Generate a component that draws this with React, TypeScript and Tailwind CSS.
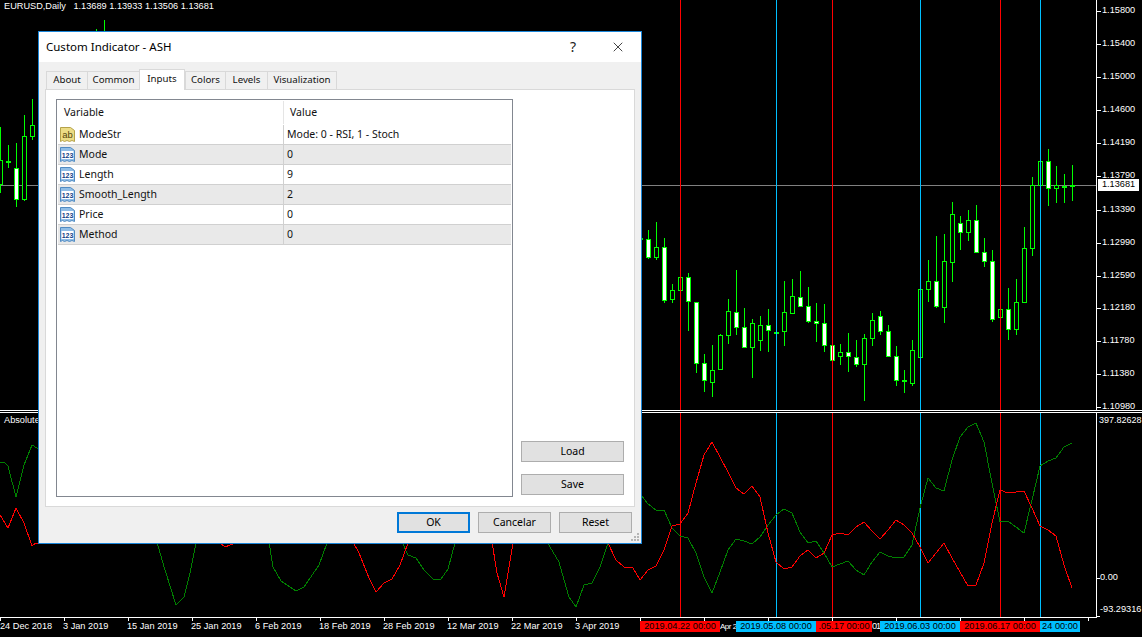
import { X } from "lucide-react"

type Candle = [number, number, number, number, number, "w" | "h"]

// x, wick top, wick bottom, body top, body bottom, w = white body / h = hollow
const candles: Candle[] = [
  [0, 127, 193, 160, 184, "h"], [8, 145, 168, 161, 162, "h"], [16, 143, 207, 168, 199, "w"],
  [24, 115, 201, 136, 199, "h"], [32, 99, 140, 125, 136, "h"],
  [96, 29, 40, 34, 38, "h"], [104, 20, 40, 34, 38, "h"],
  [640, 238, 239, 238, 239, "h"],
  [648, 230, 259, 239, 257, "w"], [656, 222, 260, 247, 257, "h"], [664, 238, 303, 247, 300, "w"],
  [672, 284, 303, 290, 299, "h"], [680, 277, 290, 277, 290, "h"], [688, 273, 331, 277, 301, "w"],
  [696, 302, 373, 302, 363, "w"], [704, 354, 392, 363, 380, "w"], [712, 345, 397, 370, 382, "h"],
  [720, 334, 369, 335, 369, "h"], [728, 299, 344, 311, 335, "h"], [736, 270, 335, 312, 327, "w"],
  [744, 308, 347, 327, 347, "w"], [752, 319, 378, 323, 347, "h"], [760, 316, 351, 325, 340, "h"],
  [768, 309, 352, 325, 330, "w"], [776, 331, 333, 332, 333, "h"], [784, 281, 346, 312, 331, "h"],
  [792, 279, 314, 296, 313, "h"], [800, 271, 307, 297, 306, "w"], [808, 287, 323, 306, 321, "w"],
  [816, 303, 342, 321, 323, "w"], [824, 304, 352, 323, 345, "w"], [832, 345, 360, 345, 360, "w"],
  [840, 344, 365, 352, 356, "h"], [848, 333, 372, 352, 356, "w"], [856, 340, 367, 357, 364, "w"],
  [864, 334, 401, 338, 364, "h"], [872, 313, 346, 320, 338, "h"], [880, 311, 335, 316, 331, "w"],
  [888, 325, 357, 331, 356, "w"], [896, 346, 386, 356, 380, "w"], [904, 370, 393, 380, 381, "h"],
  [912, 340, 386, 350, 383, "h"], [920, 289, 357, 289, 357, "h"], [928, 260, 302, 281, 289, "h"],
  [936, 236, 308, 281, 306, "w"], [944, 234, 323, 261, 307, "h"], [952, 202, 282, 214, 262, "h"],
  [960, 216, 250, 223, 232, "w"], [968, 210, 241, 220, 232, "h"], [976, 205, 252, 220, 252, "w"],
  [984, 238, 267, 252, 261, "w"], [992, 250, 322, 261, 319, "w"], [1000, 309, 317, 309, 317, "h"],
  [1008, 288, 340, 309, 329, "w"], [1016, 279, 335, 302, 329, "h"], [1024, 227, 302, 248, 302, "h"],
  [1032, 177, 256, 185, 248, "h"], [1040, 161, 185, 161, 185, "h"], [1048, 149, 206, 161, 188, "w"],
  [1056, 166, 203, 185, 188, "h"], [1064, 174, 203, 186, 187, "h"], [1072, 165, 201, 185, 186, "h"],
]

const redLine = [
  [0, 515], [8, 528], [16, 508], [24, 523], [32, 546], [36, 543], [43, 543], [220, 543], [225, 547], [235, 543],
  [353, 542], [359, 553], [369, 578], [376, 592], [384, 583], [392, 579], [400, 565], [408, 543], [492, 542],
  [497, 573], [504, 597], [508, 573], [513, 543], [608, 543], [616, 560], [624, 567], [633, 568], [640, 580],
  [648, 570], [656, 566], [664, 550], [672, 526], [680, 524], [688, 513], [696, 483], [704, 455], [712, 442],
  [720, 457], [728, 472], [736, 488], [744, 494], [752, 486], [760, 497], [768, 533], [776, 562], [784, 569],
  [792, 567], [800, 556], [808, 550], [816, 558], [824, 553], [832, 535], [840, 533], [848, 535], [856, 527],
  [864, 522], [872, 531], [880, 539], [888, 530], [896, 520], [904, 525], [912, 533], [920, 547], [928, 563],
  [936, 553], [944, 543], [952, 558], [960, 572], [968, 586], [976, 585], [984, 563], [992, 523], [1000, 490],
  [1008, 493], [1016, 492], [1024, 491], [1032, 508], [1040, 526], [1048, 530], [1056, 536], [1064, 565], [1072, 588],
]

const greenLine = [
  [0, 462], [5, 463], [8, 466], [16, 497], [24, 465], [32, 445], [37, 448], [157, 542], [165, 570], [176, 605],
  [184, 597], [190, 573], [196, 543], [269, 542], [273, 567], [281, 581], [296, 591], [304, 587], [319, 565],
  [327, 543], [402, 542], [408, 555], [416, 558], [424, 570], [433, 579], [441, 579], [448, 569], [455, 543],
  [547, 542], [559, 562], [569, 597], [576, 607], [584, 585], [592, 583], [600, 567], [608, 543], [642, 496],
  [648, 504], [656, 510], [664, 510], [672, 528], [680, 536], [688, 538], [696, 553], [704, 577], [712, 593],
  [720, 572], [728, 550], [736, 539], [744, 541], [752, 544], [760, 537], [768, 525], [776, 515], [784, 509],
  [792, 513], [800, 532], [808, 543], [816, 541], [824, 553], [832, 567], [840, 564], [848, 561], [856, 570],
  [864, 575], [872, 562], [880, 552], [888, 556], [896, 558], [904, 557], [912, 545], [920, 508], [928, 478],
  [936, 488], [944, 491], [952, 460], [960, 437], [968, 427], [976, 423], [984, 442], [992, 483], [1000, 522],
  [1008, 521], [1016, 527], [1024, 533], [1032, 500], [1040, 466], [1048, 461], [1056, 458], [1064, 447], [1072, 443],
]

const vlines: [number, string][] = [
  [680, "#ff0000"], [776, "#00bfff"], [832, "#ff0000"], [920, "#00bfff"], [1000, "#ff0000"], [1040, "#00bfff"],
]

const priceLabels: [string, number][] = [
  ["1.15800", 11], ["1.15400", 44], ["1.15000", 77], ["1.14600", 110], ["1.14190", 143], ["1.13790", 176],
  ["1.13390", 210], ["1.12990", 243], ["1.12590", 276], ["1.12180", 308], ["1.11780", 341], ["1.11380", 374],
  ["1.10980", 407],
]

const dateLabels: [string, number][] = [
  ["24 Dec 2018", 0], ["3 Jan 2019", 63], ["15 Jan 2019", 127], ["25 Jan 2019", 191], ["6 Feb 2019", 255],
  ["18 Feb 2019", 319], ["28 Feb 2019", 383], ["12 Mar 2019", 447], ["22 Mar 2019", 511], ["3 Apr 2019", 575],
]

const flags: { text: string; left: number; width: number; red: boolean }[] = [
  { text: "2019.04.22 00:00", left: 640, width: 80, red: true },
  { text: "2019.05.08 00:00", left: 736, width: 80, red: false },
  { text: ".05.17 00:00", left: 816, width: 56, red: true },
  { text: "2019.06.03 00:00", left: 880, width: 80, red: false },
  { text: "2019.06.17 00:00", left: 960, width: 80, red: true },
  { text: "24 00:00", left: 1040, width: 40, red: false },
]

const inputs: { name: string; value: string; kind: "ab" | "123" }[] = [
  { name: "ModeStr", value: "Mode: 0 - RSI, 1 - Stoch", kind: "ab" },
  { name: "Mode", value: "0", kind: "123" },
  { name: "Length", value: "9", kind: "123" },
  { name: "Smooth_Length", value: "2", kind: "123" },
  { name: "Price", value: "0", kind: "123" },
  { name: "Method", value: "0", kind: "123" },
]

const tabs = ["About", "Common", "Inputs", "Colors", "Levels", "Visualization"]
const tabWidths = [41, 52, 46, 40, 42, 69]

const toPoints = (pts: number[][]) => pts.map((p) => p.join(",")).join(" ")

function VLines({ top, bottom }: { top: number; bottom: number }) {
  return (
    <>
      {vlines.map(([x, color]) => (
        <line key={x} x1={x + 0.5} x2={x + 0.5} y1={top} y2={bottom} stroke={color} />
      ))}
    </>
  )
}

function MainChart() {
  return (
    <svg className="absolute inset-0" width="1096" height="410" viewBox="0 0 1096 410" shapeRendering="crispEdges">
      <line x1="0" x2="1096" y1="185.5" y2="185.5" stroke="#808080" />
      {candles.map(([x, wt, wb, bt, bb, kind]) => (
        <g key={x}>
          <line x1={x + 0.5} x2={x + 0.5} y1={wt} y2={wb} stroke="#00ff00" />
          <rect
            x={x - 1.5}
            y={bt + 0.5}
            width="4"
            height={bb - bt}
            fill={kind === "w" ? "#ffffff" : "#000000"}
            stroke="#00ff00"
          />
        </g>
      ))}
      <VLines top={0} bottom={410} />
    </svg>
  )
}

function SubChart() {
  return (
    <svg className="absolute inset-0" width="1096" height="204" viewBox="0 413 1096 204" shapeRendering="crispEdges">
      <VLines top={413} bottom={617} />
      <polyline points={toPoints(greenLine)} fill="none" stroke="#008000" />
      <polyline points={toPoints(redLine)} fill="none" stroke="#ff0000" />
    </svg>
  )
}

function PriceLabel({ text, y }: { text: string; y: number }) {
  return (
    <div className="absolute left-0 flex items-center h-[12px] gap-[1px]" style={{ top: y - 6 }}>
      <div className="w-[4px] h-px bg-white" />
      <span>{text}</span>
    </div>
  )
}

function VarIcon({ kind }: { kind: "ab" | "123" }) {
  const yellow = kind === "ab"
  const fill = yellow ? "#ecdc85" : "#8fbde6"
  const line = yellow ? "#b5a24a" : "#4f8ac2"
  const ink = yellow ? "#55460a" : "#123f86"
  return (
    <svg width="17" height="17" viewBox="0 0 17 17" className="shrink-0">
      <path
        d="M1.5 1.5H11.5L15.5 4.5V15.5L13 14.5L10.5 15.5L8 14.5L5.5 15.5L3.5 14.5L1.5 15.5Z"
        fill={fill}
        stroke={line}
      />
      {!yellow && <rect x="2.5" y="5" width="12" height="8" fill="#ffffff" />}
      <text
        x="8.5"
        y="12"
        textAnchor="middle"
        fontSize={yellow ? 9.5 : 7}
        fontWeight={yellow ? 400 : 700}
        fontFamily="'Liberation Sans', sans-serif"
        fill={ink}
      >
        {kind}
      </text>
    </svg>
  )
}

function WinButton({ label, primary, className }: { label: string; primary?: boolean; className: string }) {
  return (
    <button
      className={
        "h-[21px] bg-[#e1e1e1] text-black flex items-center justify-center " +
        (primary ? "border-2 border-[#0078d7] " : "border border-[#adadad] ") +
        className
      }
    >
      {label}
    </button>
  )
}

function IndicatorDialog() {
  return (
    <div className="absolute left-[38px] top-[31px] w-[604px] h-[513px] border border-[#1a86d9] bg-[#f0f0f0] flex flex-col font-['Noto_Sans',sans-serif] text-[10.5px] leading-none text-[#111]">
      <div className="h-[30px] bg-white flex items-center shrink-0 pl-[7px]">
        <span className="text-[11.5px] text-black">Custom Indicator - ASH</span>
        <span className="ml-auto text-[14px] text-[#222] mr-[34px]">?</span>
        <X size={16} strokeWidth={1.1} className="mr-[15px] text-black" />
      </div>

      <div className="flex items-end h-[28px] pl-[7px] shrink-0 relative z-10 text-[9.7px]">
        {tabs.map((t, i) =>
          t === "Inputs" ? (
            <div
              key={t}
              className="h-[21px] bg-white border border-b-0 border-[#d9d9d9] flex justify-center pt-[4px]"
              style={{ width: tabWidths[i] }}
            >
              {t}
            </div>
          ) : (
            <div
              key={t}
              className="h-[18px] mb-px bg-[#f0f0f0] border border-b-0 border-[#d9d9d9] flex justify-center pt-[3px] -mr-px"
              style={{ width: tabWidths[i] + 1 }}
            >
              {t}
            </div>
          )
        )}
      </div>

      <div className="mx-[6px] -mt-px h-[418px] bg-white border border-[#d9d9d9] flex pl-[10px] pr-[10px] pt-[9px] pb-[9px] shrink-0">
        <div className="w-[457px] border border-[#828790] flex flex-col bg-white">
          <div className="h-[25px] grid grid-cols-[226px_1fr] shrink-0">
            <div className="pl-[7px] flex items-center">Variable</div>
            <div className="border-l border-[#e5e5e5] pl-[6px] flex items-center my-px">Value</div>
          </div>
          {inputs.map((row, i) => (
            <div
              key={row.name}
              className={
                "h-[20px] ml-px mr-px grid grid-cols-[225px_1fr] border-b border-[#d0d0d0] shrink-0 " +
                (i % 2 === 1 ? "bg-[#e9e9e9]" : "bg-white")
              }
            >
              <div className="flex items-center pl-[1px] gap-[3px]">
                <VarIcon kind={row.kind} />
                <span>{row.name}</span>
              </div>
              <div className="border-l border-[#d0d0d0] pl-[3px] flex items-center">{row.value}</div>
            </div>
          ))}
        </div>
        <div className="ml-[8px] w-[103px] flex flex-col justify-end gap-[12px] pb-[2px]">
          <WinButton label="Load" className="w-[103px]" />
          <WinButton label="Save" className="w-[103px]" />
        </div>
      </div>

      <div className="flex justify-end gap-[8px] pr-[9px] pt-[5px]">
        <WinButton label="OK" primary className="w-[73px]" />
        <WinButton label="Cancelar" className="w-[73px]" />
        <WinButton label="Reset" className="w-[73px]" />
      </div>

      <svg className="absolute right-[1px] bottom-[1px]" width="9" height="9" viewBox="0 0 9 9" fill="#b5b5b5">
        <rect x="6" y="0" width="2" height="2" />
        <rect x="3" y="3" width="2" height="2" />
        <rect x="6" y="3" width="2" height="2" />
        <rect x="0" y="6" width="2" height="2" />
        <rect x="3" y="6" width="2" height="2" />
        <rect x="6" y="6" width="2" height="2" />
      </svg>
    </div>
  )
}

export default function App() {
  return (
    <div className="relative w-[1142px] h-[637px] bg-black overflow-hidden flex flex-col text-white font-['Liberation_Sans',sans-serif] text-[9.2px] leading-none">
      <div className="h-[410px] flex shrink-0">
        <div className="relative w-[1096px]">
          <MainChart />
          <div className="absolute left-[4px] top-[1px] h-[12px] flex items-center whitespace-pre">
            EURUSD,Daily{"   "}1.13689 1.13933 1.13506 1.13681
          </div>
        </div>
        <div className="relative flex-1 border-l border-white">
          {priceLabels.map(([t, y]) => (
            <PriceLabel key={t} text={t} y={y} />
          ))}
          <div className="absolute left-[1px] top-[179px] w-[41px] h-[12px] bg-white text-black flex items-center justify-center">
            1.13681
          </div>
        </div>
      </div>

      <div className="h-[3px] border-y border-white shrink-0" />

      <div className="h-[204px] flex shrink-0">
        <div className="relative w-[1096px]">
          <SubChart />
          <div className="absolute left-[4px] top-[2px] h-[12px] flex items-center">Absolute Strength</div>
        </div>
        <div className="relative flex-1 border-l border-white">
          <div className="absolute left-[2px] top-[1px] h-[12px] flex items-center text-[9px]">397.82628</div>
          <div className="absolute left-[3px] top-[159px] h-[12px] flex items-center">0.00</div>
          <div className="absolute left-[3px] top-[191px] h-[12px] flex items-center">-93.29316</div>
          <div className="absolute left-[-1px] top-[165px] w-[4px] h-px bg-white" />
          <div className="absolute left-[-1px] top-[203px] w-[4px] h-px bg-white" />
        </div>
      </div>

      <div className="relative flex-1">
        <div className="absolute left-0 top-0 w-[1097px] h-px bg-white" />
        {Array.from({ length: 18 }, (_, i) => (
          <div key={i} className="absolute top-0 w-px h-[4px] bg-white" style={{ left: 64 * i }} />
        ))}
        {dateLabels.map(([t, x]) => (
          <div key={t} className="absolute top-[4px] h-[12px] flex items-center whitespace-nowrap" style={{ left: x }}>
            {t}
          </div>
        ))}
        <div className="absolute left-[720px] top-[4px] h-[12px] flex items-center whitespace-nowrap text-[8px] tracking-[-0.5px]">
          Apr 2
        </div>
        <div className="absolute left-[872px] top-[4px] h-[12px] flex items-center whitespace-nowrap tracking-[-1px]">
          01
        </div>
        {flags.map((f) => (
          <div
            key={f.left}
            className={
              "absolute top-[4px] h-[11px] flex items-center justify-center whitespace-nowrap text-black " +
              (f.red ? "bg-[#ff0000]" : "bg-[#00bfff]")
            }
            style={{ left: f.left, width: f.width }}
          >
            {f.text}
          </div>
        ))}
      </div>

      <IndicatorDialog />
    </div>
  )
}
